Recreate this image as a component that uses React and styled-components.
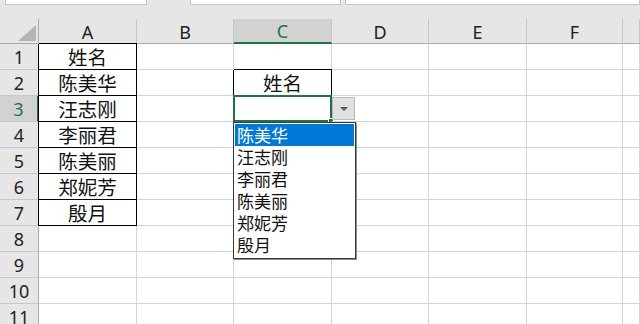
import React from 'react';
import styled, { createGlobalStyle } from 'styled-components';

const GlobalStyle = createGlobalStyle`
  html, body {
    margin: 0;
    padding: 0;
    background: #e6e6e6;
    overflow: hidden;
  }
  * { box-sizing: border-box; }
`;

const GREEN = '#217346';
const GRID = '#d4d4d4';
const HEAD_LINE = '#ababab';

const Page = styled.div`
  width: 640px;
  height: 324px;
  overflow: hidden;
  font-family: "Noto Sans CJK SC", "Noto Sans", sans-serif;
`;

const TopBar = styled.div`
  height: 19px;
  display: flex;
  padding-left: 5px;
`;

const FieldStub = styled.div`
  height: 5px;
  width: ${p => p.$w}px;
  margin-right: ${p => p.$gap || 0}px;
  background: #fff;
  border: 1px solid #c6c6c6;
  border-top: none;
`;

const Sheet = styled.div`
  display: grid;
  grid-template-columns: 39px 98px 97px 98px 97px 98px 96px 1fr;
  grid-template-rows: 25px repeat(11, 26px);
  background: #fff;
`;

const Corner = styled.div`
  background: #e6e6e6;
  border-right: 1px solid ${HEAD_LINE};
  border-bottom: 1px solid ${HEAD_LINE};
  display: flex;
  align-items: flex-end;
  justify-content: flex-end;
  padding: 0 2px 2px 0;
`;

const SelectAll = styled.div`
  width: 0;
  height: 0;
  border-left: 18px solid transparent;
  border-bottom: 16px solid #b4b4b4;
`;

const ColHead = styled.div`
  background: ${p => (p.$active ? '#d2d2d2' : '#e6e6e6')};
  border-right: 1px solid #c6c6c6;
  border-bottom: ${p => (p.$active ? `2px solid ${GREEN}` : `1px solid ${HEAD_LINE}`)};
  color: ${p => (p.$active ? GREEN : '#222')};
  font-family: "Noto Sans", "Open Sans", sans-serif;
  font-size: 18px;
  display: flex;
  align-items: center;
  justify-content: center;
  padding-top: 1px;
`;

const RowHead = styled.div`
  background: ${p => (p.$active ? '#d2d2d2' : '#e6e6e6')};
  border-right: ${p => (p.$active ? `2px solid ${GREEN}` : `1px solid ${HEAD_LINE}`)};
  border-bottom: 1px solid #c8c8c8;
  color: ${p => (p.$active ? GREEN : '#222')};
  font-family: "Noto Sans", "Open Sans", sans-serif;
  font-size: 18px;
  display: flex;
  align-items: center;
  justify-content: center;
`;

const Cell = styled.div`
  position: relative;
  border-right: 1px solid ${p => (p.$boxed ? '#000' : GRID)};
  border-bottom: 1px solid ${p => (p.$boxed ? '#000' : GRID)};
  box-shadow: ${p => (p.$boxed ? '0 -1px 0 #000, -1px 0 0 #000' : 'none')};
  font-size: 19.5px;
  color: #111;
  display: flex;
  align-items: center;
  justify-content: center;
  line-height: 1;
`;

const ActiveFrame = styled.div`
  position: absolute;
  left: -1px;
  top: -1px;
  right: -1px;
  bottom: -1px;
  border: 2px solid ${GREEN};
  pointer-events: none;
`;

const FillHandle = styled.div`
  position: absolute;
  right: -4px;
  bottom: -4px;
  width: 6px;
  height: 6px;
  background: ${GREEN};
  border: 1px solid #fff;
`;

const DropButton = styled.div`
  position: absolute;
  left: 98px;
  top: 1px;
  width: 23px;
  height: 23px;
  background: #e1e1e1;
  border: 1px solid #b9b9b9;
  display: flex;
  align-items: center;
  justify-content: center;
  z-index: 2;
`;

const Arrow = styled.div`
  width: 0;
  height: 0;
  border-left: 4px solid transparent;
  border-right: 4px solid transparent;
  border-top: 4px solid #555;
  margin-top: 1px;
`;

const List = styled.div`
  position: absolute;
  left: -1px;
  top: 26px;
  width: 123px;
  height: 137px;
  background: #fff;
  border: 1px solid #3a3a3a;
  box-shadow: 1px 1px 0 #8a8a8a;
  padding: 1px;
  z-index: 3;
`;

const Option = styled.div`
  height: 22px;
  padding-left: 2px;
  font-size: 17px;
  line-height: 22px;
  background: ${p => (p.$selected ? '#0078d7' : 'transparent')};
  color: ${p => (p.$selected ? '#fff' : '#111')};
`;

const names = ['陈美华', '汪志刚', '李丽君', '陈美丽', '郑妮芳', '殷月'];
const cols = ['A', 'B', 'C', 'D', 'E', 'F', ''];

export default function App() {
  const rows = [];
  for (let r = 1; r <= 11; r++) {
    rows.push(
      <RowHead key={`h${r}`} $active={r === 3}>{r}</RowHead>
    );
    cols.forEach((c, i) => {
      let text = '';
      let boxed = false;
      if (c === 'A' && r <= 7) {
        boxed = true;
        text = r === 1 ? '姓名' : names[r - 2];
      }
      if (c === 'C' && r === 2) {
        boxed = true;
        text = '姓名';
      }
      const active = c === 'C' && r === 3;
      rows.push(
        <Cell key={`${r}-${i}`} $boxed={boxed}>
          {text}
          {active && (
            <>
              <ActiveFrame>
                <FillHandle />
              </ActiveFrame>
              <DropButton><Arrow /></DropButton>
              <List>
                {names.map((n, k) => (
                  <Option key={n} $selected={k === 0}>{n}</Option>
                ))}
              </List>
            </>
          )}
        </Cell>
      );
    });
  }

  return (
    <Page>
      <GlobalStyle />
      <TopBar>
        <FieldStub $w={144} $gap={43} />
        <FieldStub $w={153} $gap={4} />
        <FieldStub $w={300} />
      </TopBar>
      <Sheet>
        <Corner><SelectAll /></Corner>
        {cols.map((c, i) => (
          <ColHead key={i} $active={c === 'C'}>{c}</ColHead>
        ))}
        {rows}
      </Sheet>
    </Page>
  );
}
